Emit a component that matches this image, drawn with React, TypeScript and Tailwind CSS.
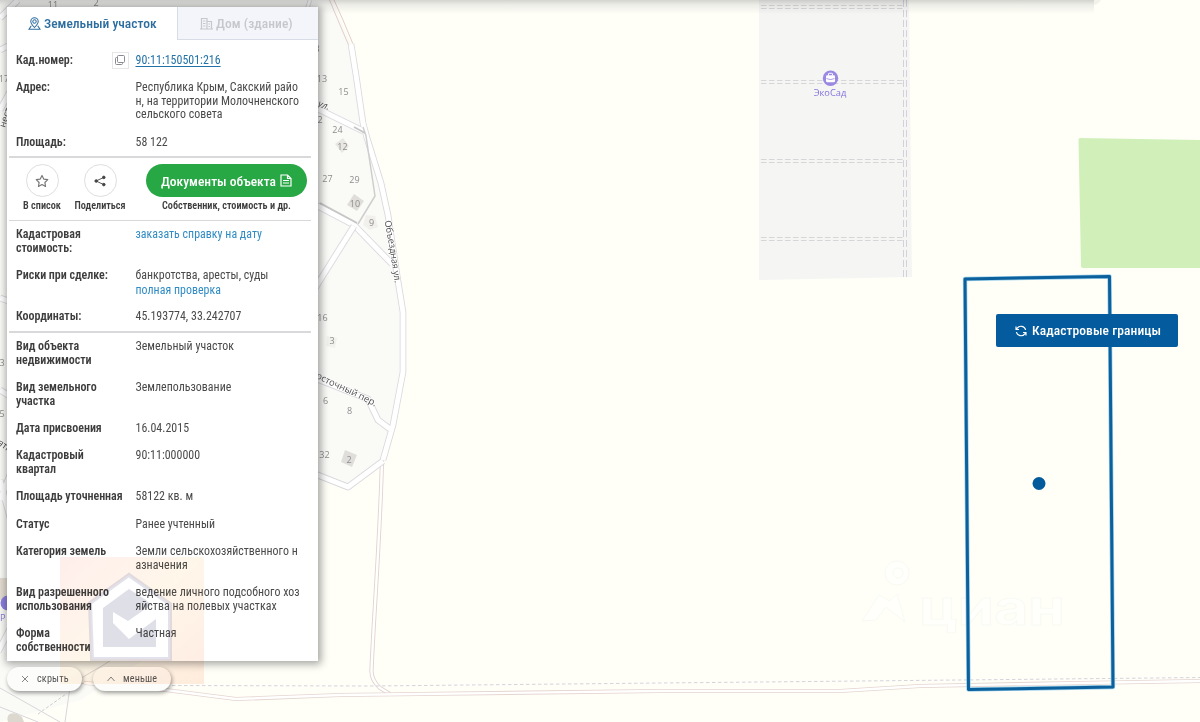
import React from "react";

type Row = { label: string[]; value: React.ReactNode[]; copy?: boolean };

const objectRows: Row[] = [
  { label: ["Вид объекта", "недвижимости"], value: ["Земельный участок"] },
  { label: ["Вид земельного", "участка"], value: ["Землепользование"] },
  { label: ["Дата присвоения"], value: ["16.04.2015"] },
  { label: ["Кадастровый", "квартал"], value: ["90:11:000000"] },
  { label: ["Площадь уточненная"], value: ["58122 кв. м"] },
  { label: ["Статус"], value: ["Ранее учтенный"] },
  { label: ["Категория земель"], value: ["Земли сельскохозяйственного н", "азначения"] },
  { label: ["Вид разрешенного", "использования"], value: ["ведение личного подсобного хоз", "яйства на полевых участках"] },
  { label: ["Форма", "собственности"], value: ["Частная"] },
];

function InfoRow({ label, value, copy }: Row) {
  return (
    <div className="flex py-[6.8px] leading-[13.7px] whitespace-nowrap">
      <dt className="flex w-[119.5px] shrink-0 text-[12px] font-semibold tracking-[-0.04px] text-[#3d3d3d]">
        <div className="grow">
          {label.map((line) => (
            <div key={line}>{line}</div>
          ))}
        </div>
        {copy && (
          <button className="-my-[2px] mr-[7px] flex size-[17px] items-center justify-center border border-[#e6e6e6] bg-white">
            <svg viewBox="0 0 12 12" className="size-[12px]" fill="none" stroke="#8a8a93" strokeWidth="1">
              <rect x="3.5" y="1.5" width="7" height="7" rx="1" />
              <path d="M3.5 3.5h-1a1 1 0 0 0-1 1v5a1 1 0 0 0 1 1h5a1 1 0 0 0 1-1v-1" />
            </svg>
          </button>
        )}
      </dt>
      <dd className="text-[11.9px] tracking-[0.03px] text-[#4a4a4a]">
        {value.map((line, i) => (
          <div key={i}>{line}</div>
        ))}
      </dd>
    </div>
  );
}

function Divider() {
  return <div className="mr-[7px] ml-[2px] h-[1.6px] shrink-0 bg-[#d9d9dc]" />;
}

const ring =
  "M351 44 L356 75 L363 123 L367 138 L381 183 L388 215 L397 275 L403 312 L403 372 L393 425 L383 460";

const labels: [number, number, string][] = [
  [53, 8, "11"], [96, 6, "2"], [317, 52, "3"], [322, 82, "13"], [343.5, 94.5, "15"], [320, 122.5, "2"],
  [337.5, 133, "24"], [342.5, 150, "12"], [327.5, 182, "27"], [354.5, 182.5, "29"], [355, 207, "10"],
  [371.5, 225.5, "9"], [322.5, 321, "16"], [332, 344, "3"], [325.5, 403.5, "6"], [349.5, 413.5, "8"],
  [324.5, 457.5, "32"], [349, 462.5, "2"], [4, 81.500, "17"], [2, 366, "3"], [2, 417, "5"],
];

function Road({ d, w = 5, edge = "#dbd9df" }: { d: string; w?: number; edge?: string }) {
  return (
    <>
      <path d={d} stroke={edge} strokeWidth={w + 1.8} />
      <path d={d} stroke="#ffffff" strokeWidth={w} />
    </>
  );
}

function MapCanvas() {
  return (
    <svg viewBox="0 0 1200 722" className="absolute inset-0 h-[722px] w-[1200px] font-stretch-normal">
      <defs>
        <linearGradient id="topShade" x1="0" y1="0" x2="0" y2="1">
          <stop offset="0" stopColor="#000" stopOpacity="0.17" />
          <stop offset="0.35" stopColor="#000" stopOpacity="0.07" />
          <stop offset="1" stopColor="#000" stopOpacity="0" />
        </linearGradient>
        <path id="bypass" d="M384.5 221 L390 250 L397 298" />
        <path id="eastLane" d="M310 375 L330 385 L352 395 L368 403 L390 415" />
      </defs>
      <rect width="1200" height="722" fill="#fffff8" />
      <path d="M0 0H333L341 20L351 44L363 123L381 183L388 215L397 275L403 312V372L393 425L383 463L348 486L318 478L240 600L80 700L0 722Z" fill="#fafbf7" />
      <path d="M759 0H909L912 277L759 280Z" fill="#f5f5f4" />
      <path d="M1080 138L1200 140V268L1083 268Q1081 268 1081 266L1078.500 140Q1078.500 138 1080 138Z" fill="#d1f0b9" />

      <g fill="none" strokeLinejoin="round">
        <Road d="M310 0 L306 12" w={2.5} />
        <Road d="M18 0 L0 18 M0 50 L20 40 M0 110 L14 84 M0 298 L20 305 M0 390 L16 400" w={5} />
        <Road d="M0 500 L24 440 M0 480 L16 540 M-2 652 L12 625" w={5} />
        <path d="M329.500 0 L340 25 L349 46 M334 0 L343 20 L353 44" stroke="#e3cdc7" />
        <Road d="M382 460 C380 540 374 610 371.500 670 Q371 680 380 688 L390 694" w={2.4} edge="#e0d3cf" />
        <Road d="M84 683 L150 688 L236 699 L340 695 L420 694 L660 691 L840 691 L920 686 L1080 683 L1200 681" w={2.4} edge="#e5d5d0" />
        <path d={ring} stroke="#dad8dd" strokeWidth="6.600" />
        <Road d="M312 106 L363 131" />
        <Road d="M312 203 L354 225 L392 264" />
        <Road d="M354 226 L312 293" />
        <Road d="M312 377 L368 399 L378 420 L390 429" />
        <Road d="M310 472 L348 487 L383 461" />
        <path d={ring} stroke="#fff" strokeWidth="4.900" />
        <path d="M0 688 L60 722 M70 687 L65 722 M0 707 L38 722 M78 680 L110 661" stroke="#d9d5da" />
        <path d="M68 688 L84 683" stroke="#d9d5da" />
        <path d="M38 714 L66 694" stroke="#ccc" strokeDasharray="3 2" />
        <path d="M172 685.500 L372 686 L660 683 L960 680 L1200 677.500" stroke="#d6d3de" strokeDasharray="3.500 2.500" />
        <path d="M363 127 L366 136 L375 196 L358 224" stroke="#cecece" strokeWidth="1.500" />
        <path d="M354 127 L365 133 M320 203 L357 223" stroke="#c6c6c6" strokeWidth="1.800" />
        <path d="M761 5.500H904M761 8.500H904M761 80.500H904M761 83.500H904M761 159.500H904M761 162.500H904M761 237.500H904M761 240.500H904" stroke="#d6d6d9" strokeDasharray="5.500 2.500" />
        <path d="M903.500 0V277M906.500 0V277" stroke="#d2d2dc" strokeDasharray="7 3" />
      </g>

      <g fill="#dfdedb">
        <path d="M335 144L343 138L349 146L342 153Z" opacity=".7" />
        <path d="M354 194L364 201L357 211L347 205Z" />
        <path d="M345 450L357 455L352 467L341 462Z" />
        <path d="M366 215L375 216L378 227L370 230L363 225Z" opacity=".35" />
        <path d="M327 336L337 338L335 348L326 346Z" opacity=".3" />
        <path d="M8 722C5 713 14 710 22 717L24 722Z" fill="#ddd8cf" />
        <path d="M0 578H7V600H0Z" fill="#e3dcd2" />
      </g>

      <g className="font-['Open_Sans'] text-[9px]" fill="#8e8e8e" textAnchor="middle">
        {labels.map(([x, y, t], i) => (
          <text key={i} x={x} y={y}>{t}</text>
        ))}
      </g>
      <g className="font-['Open_Sans'] text-[9.3px]" fill="#4e4e4e" stroke="#fff" strokeWidth="1.500" paintOrder="stroke">
        <text textLength="63"><textPath href="#bypass">Объездная ул.</textPath></text>
        <text><textPath href="#eastLane">Восточный пер.</textPath></text>
        <text transform="translate(317.500 106) rotate(21)" fontStyle="italic">ул.</text>
        <text transform="translate(5 128) rotate(-72)">нест</text>
        <text transform="translate(-3 444) rotate(35)">ятн.</text>
      </g>
      <text x="0" y="621" className="font-['Open_Sans'] text-[9.300px]" fill="#8a79dc">Р</text>
      <circle cx="8" cy="603" r="7.500" fill="#8d7fe0" />

      <circle cx="830.500" cy="78.300" r="7.700" fill="#9a88e3" />
      <rect x="826" y="75.300" width="9" height="7" rx="1.300" fill="#fff" />
      <path d="M828.500 75.300V74Q828.500 73.300 829.200 73.300H831.800Q832.500 73.300 832.500 74V75.300" fill="none" stroke="#fff" />
      <path d="M826.500 78.500L830 79.500H831L834.500 78.500" fill="none" stroke="#9a88e3" strokeWidth=".8" />
      <text x="830" y="96.300" textAnchor="middle" className="font-['Open_Sans'] text-[9.300px]" fill="#8372dc">ЭкоСад</text>

      <g fill="#fffffb" stroke="#fafaf4" strokeWidth="1">
        <circle cx="897" cy="573" r="12" />
        <circle cx="898" cy="573" r="5" />
        <path d="M862 621L879 595L890 601L897 594L905 622L886 607L876 620Z" />
        <text x="919" y="625" className="font-['Inter'] text-[49px] font-bold" textLength="146" lengthAdjust="spacingAndGlyphs">циан</text>
      </g>

      <rect width="1094" height="14" fill="url(#topShade)" />
      <path d="M1094 0H1101Q1099 4 1094 5Z" fill="#000" opacity=".05" />

      <g fill="none" strokeLinejoin="round">
        <path d="M965 279L1109.500 276.500L1113 687L968.500 689.500Z" stroke="#9fd2ec" strokeWidth="4.400" />
        <path d="M965 279L1109.500 276.500L1113 687L968.500 689.500Z" stroke="#0c609c" strokeWidth="3" />
      </g>
      <circle cx="1039" cy="483.500" r="6.500" fill="#045b9c" />
    </svg>
  );
}

function Emblem() {
  return (
    <svg viewBox="0 0 144 127" className="pointer-events-none absolute top-[557px] left-[60px] h-[127px] w-[144px] mix-blend-multiply">
      <defs>
        <linearGradient id="warm" x1="0" y1="0" x2="1" y2="1">
          <stop offset="0" stopColor="#ff9b8c" stopOpacity=".17" />
          <stop offset=".5" stopColor="#ffcb80" stopOpacity=".17" />
          <stop offset="1" stopColor="#ff9b70" stopOpacity=".2" />
        </linearGradient>
      </defs>
      <path d="M0 0H144V127H0ZM30 46L69 18L110 47V102H32Z" fillRule="evenodd" fill="url(#warm)" />
      <path d="M30 46L69 18L110 47V102H32Z" fill="none" stroke="#8587ae" strokeOpacity=".24" strokeWidth="4" />
      <path d="M43 51L69 32L86 43L91 48L68 64L53 55V66L69 82L96 62V90H43Z" fill="#77789b" fillOpacity=".24" />
    </svg>
  );
}

export default function App() {
  return (
    <div className="relative h-[722px] w-[1200px] overflow-hidden font-['Roboto',sans-serif] font-stretch-75%">
      <MapCanvas />
      <div className="relative flex justify-between">
        <aside className="pt-[7px] pl-[7px]">
          <section className="flex h-[654px] w-[311px] flex-col bg-white shadow-[1px_1px_8px_2px_rgba(0,0,0,0.36)]">
            <div className="flex h-[33px] shrink-0 text-[13.500px] font-medium whitespace-nowrap">
              <button className="flex w-[170px] items-center pl-[21px] text-[#2c6d9f]">
                <svg viewBox="0 0 13 13" className="mr-[3px] size-[13px]" fill="none" stroke="currentColor" strokeWidth="1.050">
                  <path d="M6.500 10.500C4.500 8.500 2.800 6.800 2.800 4.500a3.700 3.700 0 0 1 7.400 0C10.200 6.800 8.500 8.500 6.500 10.500Z" />
                  <circle cx="6.500" cy="4.500" r="1.700" />
                  <path d="M3.300 8.700L1 12.200H12L9.700 8.700" />
                </svg>
                <span>Земельный участок</span>
              </button>
              <button className="flex grow items-center border-b border-l border-[#d8dce6] bg-[#f4f5fb] pl-[22px] text-[#c6c7cd]">
                <svg viewBox="0 0 13 13" className="mr-[3px] size-[13px]" fill="none" stroke="currentColor" strokeWidth="1.200">
                  <path d="M0 12H13M1.500 12V1.500H7V12M7 4.500H11.500V12M3 4H5.500M3 6.500H5.500M3 9H5.500M8.500 7H10M8.500 9.500H10" />
                </svg>
                <span className="tracking-[0.050px]">Дом (здание)</span>
              </button>
            </div>

            <dl className="h-[116px] shrink-0 pt-[6.900px] pl-[9px]">
              <InfoRow
                label={["Кад.номер:"]}
                copy
                value={[<a className="text-[#2372a8] underline underline-offset-[1.500px]">90:11:150501:216</a>]}
              />
              <InfoRow label={["Адрес:"]} value={["Республика Крым, Сакский райо", "н, на территории Молочненского", "сельского совета"]} />
              <InfoRow label={["Площадь:"]} value={["58 122"]} />
            </dl>
            <Divider />

            <div className="flex h-[62px] shrink-0 pt-[6.500px] text-[10.200px] leading-[12px] font-semibold whitespace-nowrap text-[#3d3d3d]">
              <div className="ml-[6px] flex w-[58px] flex-col items-center gap-[2.500px]">
                <button className="flex size-[33px] items-center justify-center rounded-full border border-[#dededf] bg-white">
                  <svg viewBox="0 0 24 24" className="size-[14px]" fill="none" stroke="#777" strokeWidth="2" strokeLinejoin="round">
                    <path d="M12 2.500L15 8.700L21.900 9.700L16.900 14.500L18.100 21.400L12 18.100L5.900 21.400L7.100 14.500L2.100 9.700L9 8.700Z" />
                  </svg>
                </button>
                <span>В список</span>
              </div>
              <div className="flex w-[58px] flex-col items-center gap-[2.500px]">
                <button className="flex size-[33px] items-center justify-center rounded-full border border-[#dededf] bg-white">
                  <svg viewBox="0 0 12 12" className="size-[12px]" fill="#444" stroke="#444" strokeWidth="0.900">
                    <path d="M10 2.300L2 6L10 9.700" fill="none" />
                    <circle cx="9.800" cy="2.400" r="1.300" />
                    <circle cx="2.200" cy="6" r="1.300" />
                    <circle cx="9.800" cy="9.600" r="1.300" />
                  </svg>
                </button>
                <span>Поделиться</span>
              </div>
              <div className="ml-[17px] flex w-[161px] flex-col items-center gap-[2.500px]">
                <button className="flex h-[33px] w-full items-center justify-center gap-[4px] rounded-full bg-[#28a745] text-[13.500px] font-medium text-white">
                  <span>Документы объекта</span>
                  <svg viewBox="0 0 12 13" className="h-[13px] w-[12px]" fill="none" stroke="#fff" strokeWidth="1.200">
                    <path d="M1 1H7.500L11 4.500V12H1ZM7.500 1V4.500H11M3 6.500H9M3 9H9" />
                  </svg>
                </button>
                <span>Собственник, стоимость и др.</span>
              </div>
            </div>
            <Divider />

            <dl className="h-[110px] shrink-0 pl-[9px]">
              <InfoRow label={["Кадастровая", "стоимость:"]} value={[<a className="text-[#318cc5]">заказать справку на дату</a>]} />
              <InfoRow
                label={["Риски при сделке:"]}
                value={["банкротства, аресты, суды", <a className="relative top-[1px] text-[#318cc5]">полная проверка</a>]}
              />
              <InfoRow label={["Координаты:"]} value={["45.193774, 33.242707"]} />
            </dl>
            <Divider />

            <dl className="pt-[0.500px] pl-[9px]">
              {objectRows.map((row) => (
                <InfoRow key={row.label[0]} {...row} />
              ))}
            </dl>
          </section>

          <div className="mt-[6px] flex gap-[11px] text-[10.200px] tracking-[0.150px] text-[#555]">
            <button className="flex h-[24px] w-[75px] items-center rounded-full bg-[#fcfcfa] pl-[14px] shadow-[1px_2px_4px_rgba(0,0,0,0.4)]">
              <svg viewBox="0 0 8 8" className="mr-[8px] size-[8px]" stroke="#777" strokeWidth=".9">
                <path d="M1 1L7 7M7 1L1 7" />
              </svg>
              скрыть
            </button>
            <button className="flex h-[24px] w-[78px] items-center rounded-full bg-[#fcfcfa] pl-[14px] shadow-[1px_2px_4px_rgba(0,0,0,0.4)]">
              <svg viewBox="0 0 8 8" className="mr-[8px] size-[8px]" fill="none" stroke="#777" strokeWidth=".9">
                <path d="M.5 6L4 2L7.500 6" />
              </svg>
              меньше
            </button>
          </div>
        </aside>

        <button className="mt-[314px] mr-[22px] flex h-[33px] w-[182px] items-center rounded-[2px] bg-[#045b9e] pl-[19px] text-[13.500px] font-medium whitespace-nowrap text-white">
          <svg viewBox="0 0 12 12" className="mr-[5px] size-[12px]" fill="none" stroke="#fff" strokeWidth="1.150">
            <path d="M1.400 5A4.700 4.700 0 0 1 9.800 3.200L11 4.500M11 1.500V4.500H8M10.600 7A4.700 4.700 0 0 1 2.200 8.800L1 7.500M1 10.500V7.500H4" transform="matrix(-1 0 0 1 12 0)" />
          </svg>
          <span className="tracking-[0.080px]">Кадастровые границы</span>
        </button>
      </div>
      <Emblem />
    </div>
  );
}
